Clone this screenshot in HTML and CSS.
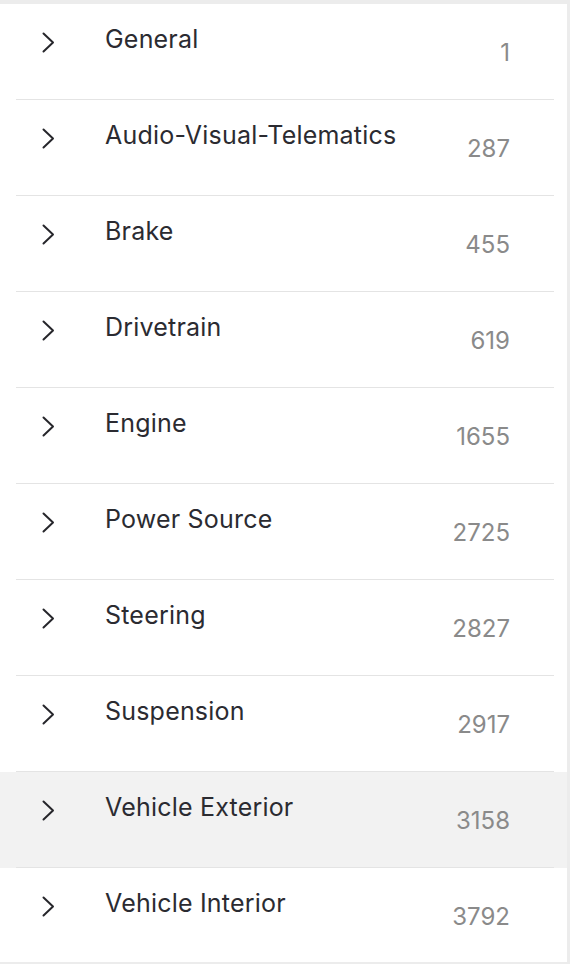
FILE: index.html
```html
<!DOCTYPE html>
<html lang="en">

<head>
    <meta charset="UTF-8" />
    <meta name="viewport" content="width=device-width, initial-scale=1.0" />
    <title>Categories</title>
    <link rel="stylesheet" href="styles.css">
</head>

<body>
    <div class="panel">
        <ul class="tree">
            <li class="row">
                <div class="row-inner">
                    <span class="chevron"><svg width="13" height="21" viewBox="0 0 13 21"><path d="M1.5 1.5 L11 10.5 L1.5 19.5" /></svg></span>
                    <span class="label">General</span>
                    <span class="count">1</span>
                </div>
            </li>
            <li class="row">
                <div class="row-inner">
                    <span class="chevron"><svg width="13" height="21" viewBox="0 0 13 21"><path d="M1.5 1.5 L11 10.5 L1.5 19.5" /></svg></span>
                    <span class="label">Audio-Visual-Telematics</span>
                    <span class="count">287</span>
                </div>
            </li>
            <li class="row">
                <div class="row-inner">
                    <span class="chevron"><svg width="13" height="21" viewBox="0 0 13 21"><path d="M1.5 1.5 L11 10.5 L1.5 19.5" /></svg></span>
                    <span class="label">Brake</span>
                    <span class="count">455</span>
                </div>
            </li>
            <li class="row">
                <div class="row-inner">
                    <span class="chevron"><svg width="13" height="21" viewBox="0 0 13 21"><path d="M1.5 1.5 L11 10.5 L1.5 19.5" /></svg></span>
                    <span class="label">Drivetrain</span>
                    <span class="count">619</span>
                </div>
            </li>
            <li class="row">
                <div class="row-inner">
                    <span class="chevron"><svg width="13" height="21" viewBox="0 0 13 21"><path d="M1.5 1.5 L11 10.5 L1.5 19.5" /></svg></span>
                    <span class="label">Engine</span>
                    <span class="count">1655</span>
                </div>
            </li>
            <li class="row">
                <div class="row-inner">
                    <span class="chevron"><svg width="13" height="21" viewBox="0 0 13 21"><path d="M1.5 1.5 L11 10.5 L1.5 19.5" /></svg></span>
                    <span class="label">Power Source</span>
                    <span class="count">2725</span>
                </div>
            </li>
            <li class="row">
                <div class="row-inner">
                    <span class="chevron"><svg width="13" height="21" viewBox="0 0 13 21"><path d="M1.5 1.5 L11 10.5 L1.5 19.5" /></svg></span>
                    <span class="label">Steering</span>
                    <span class="count">2827</span>
                </div>
            </li>
            <li class="row">
                <div class="row-inner">
                    <span class="chevron"><svg width="13" height="21" viewBox="0 0 13 21"><path d="M1.5 1.5 L11 10.5 L1.5 19.5" /></svg></span>
                    <span class="label">Suspension</span>
                    <span class="count">2917</span>
                </div>
            </li>
            <li class="row active">
                <div class="row-inner">
                    <span class="chevron"><svg width="13" height="21" viewBox="0 0 13 21"><path d="M1.5 1.5 L11 10.5 L1.5 19.5" /></svg></span>
                    <span class="label">Vehicle Exterior</span>
                    <span class="count">3158</span>
                </div>
            </li>
            <li class="row">
                <div class="row-inner">
                    <span class="chevron"><svg width="13" height="21" viewBox="0 0 13 21"><path d="M1.5 1.5 L11 10.5 L1.5 19.5" /></svg></span>
                    <span class="label">Vehicle Interior</span>
                    <span class="count">3792</span>
                </div>
            </li>
        </ul>
    </div>
</body>

</html>
```

FILE: styles.css
```css
html, body {
    margin: 0;
    height: 100%;
    overflow: hidden;
}

body {
    background-color: #ececec;
    font-family: Inter, "Noto Sans", sans-serif;
}

.panel {
    margin-top: 4px;
    width: 567px;
    height: 958px;
    background-color: #ffffff;
    overflow: hidden;
}

.tree {
    list-style: none;
    margin: 0;
    padding: 0;
}

.row {
    height: 96px;
}

.row.active {
    background-color: #f2f2f2;
}

.row-inner {
    box-sizing: border-box;
    height: 96px;
    margin: 0 13px 0 16px;
    border-bottom: 1px solid #e4e4e4;
    display: grid;
    grid-template-columns: 89px 1fr auto;
    padding-right: 44px;
}

.chevron {
    padding: 28px 0 0 26px;
}

.chevron svg {
    display: block;
}

.chevron path {
    fill: none;
    stroke: #26262b;
    stroke-width: 2;
    stroke-linecap: round;
    stroke-linejoin: round;
}

.label {
    padding-top: 21px;
    font-size: 25px;
    line-height: 28px;
    letter-spacing: 0.2px;
    color: #2b2b31;
}

.count {
    padding-top: 35px;
    font-size: 24px;
    line-height: 28px;
    color: #8a8a8a;
}
```
